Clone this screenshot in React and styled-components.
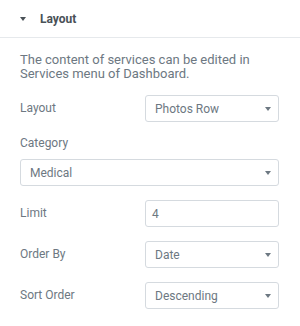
import React from "react";
import styled, {createGlobalStyle} from "styled-components";

const GlobalStyle = createGlobalStyle`
  html, body {
    margin: 0;
    padding: 0;
    background: #fff;
  }
  body {
    font-family: Roboto, "Liberation Sans", Arial, sans-serif;
  }
`

const Panel = styled.div`
  width: 300px;
  height: 326px;
  background: #fff;
  overflow: hidden;
`

const SectionHeader = styled.div`
  height: 37px;
  display: flex;
  align-items: center;
  padding: 0 20px;
  border-bottom: 1px solid #e6e9ec;
  color: #495157;
  font-size: 12px;
  font-weight: 700;
`

const Caret = styled.span`
  width: 0;
  height: 0;
  border-left: 3.5px solid transparent;
  border-right: 3.5px solid transparent;
  border-top: 4px solid ${p => p.color || '#495157'};
  margin-right: ${p => p.gap || 0}px;
  flex-shrink: 0;
`

const Controls = styled.div`
  display: flex;
  flex-direction: column;
  gap: 14px;
  padding: 15px 21px 0 20px;
`

const Description = styled.div`
  font-size: 13px;
  line-height: 14px;
  color: #6d7882;
`

const Row = styled.div`
  display: grid;
  grid-template-columns: 125px 1fr;
  align-items: center;
`

const Stack = styled.div`
  display: flex;
  flex-direction: column;
  gap: 8px;
`

const Label = styled.div`
  font-size: 12px;
  line-height: 15px;
  color: #6d7882;
`

const Field = styled.div`
  box-sizing: border-box;
  height: 27px;
  border: 1px solid #d5dadf;
  border-radius: 3px;
  display: flex;
  align-items: center;
  justify-content: space-between;
  padding: 0 7px 0 ${p => p.inset || 9}px;
  font-size: 12px;
  color: #6d7882;
  background: #fff;
`

const Select = ({value}) => (
    <Field>
        <span>{value}</span>
        <Caret color="#6d7882"/>
    </Field>
)

export default function App() {
    return (
        <Panel>
            <GlobalStyle/>
            <SectionHeader>
                <Caret gap={14}/>
                Layout
            </SectionHeader>
            <Controls>
                <Description>
                    The content of services can be edited in Services menu of Dashboard.
                </Description>
                <Row>
                    <Label>Layout</Label>
                    <Select value="Photos Row"/>
                </Row>
                <Stack>
                    <Label>Category</Label>
                    <Select value="Medical"/>
                </Stack>
                <Row>
                    <Label>Limit</Label>
                    <Field inset={6}>4</Field>
                </Row>
                <Row>
                    <Label>Order By</Label>
                    <Select value="Date"/>
                </Row>
                <Row>
                    <Label>Sort Order</Label>
                    <Select value="Descending"/>
                </Row>
            </Controls>
        </Panel>
    )
}
